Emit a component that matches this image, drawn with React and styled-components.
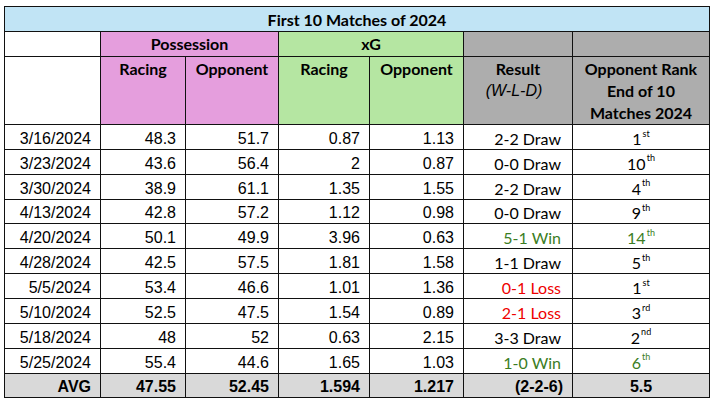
import React from "react";
import styled, { createGlobalStyle, css } from "styled-components";

const GlobalStyle = createGlobalStyle`
  html, body { margin: 0; padding: 0; background: #ffffff; }
  body { font-family: "Liberation Sans", Arial, sans-serif; }
`;

const Page = styled.div`
  padding: 6px 0 0 4px;
`;

const Sheet = styled.div`
  display: grid;
  width: max-content;
  grid-template-columns: 95px 84px 92px 90px 93px 108px 136px;
  grid-template-rows: 24px 24px 67px repeat(10, 23.87px) 23.6px;
  gap: 1px;
  padding: 1px;
  background: #111;
`;

const Cell = styled.div`
  display: flex;
  align-items: flex-end;
  background: ${(p) => p.$bg || "#ffffff"};
  color: ${(p) => p.$color || "#000000"};
  grid-column: span ${(p) => p.$span || 1};
  font-size: 16px;
  line-height: 19px;
  padding: 0 9px 1px 4px;
  box-sizing: border-box;
  overflow: hidden;
  white-space: nowrap;
`;

const TitleCell = styled(Cell)`
  align-items: center;
  justify-content: center;
  padding: 0;
  font-family: Lato, "Open Sans", sans-serif;
  font-weight: 700;
`;

const GroupCell = styled(Cell)`
  justify-content: center;
  padding: 0 0 3px 0;
  font-family: Lato, "Open Sans", sans-serif;
  font-weight: 700;
`;

const HeadCell = styled(Cell)`
  flex-direction: column;
  align-items: center;
  justify-content: flex-start;
  padding: 1px 0 0 0;
  font-family: Lato, "Open Sans", sans-serif;
  font-weight: 700;
  line-height: 22px;
`;

const SubNote = styled.span`
  font-family: "Liberation Sans", Arial, sans-serif;
  font-style: italic;
  font-weight: 400;
  margin-right: 8px;
`;

const NumCell = styled(Cell)`
  justify-content: flex-end;
  ${(p) =>
    p.$bold &&
    css`
      font-weight: 700;
    `}
`;

const ResultCell = styled(Cell)`
  justify-content: flex-end;
  font-family: Lato, "Open Sans", sans-serif;
  padding-right: 11px;
`;

const RankCell = styled(Cell)`
  justify-content: center;
  font-family: Lato, "Open Sans", sans-serif;
  padding: 0 0 1px 0;
  ${(p) =>
    p.$bold &&
    css`
      font-family: "Liberation Sans", Arial, sans-serif;
      font-weight: 700;
    `}
`;

const Sup = styled.sup`
  font-size: 9px;
  line-height: 0;
  position: relative;
  top: -2px;
  vertical-align: super;
  margin-left: 1px;
`;

const PINK = "#e59edd";
const GREEN = "#b5e6a2";
const GREY = "#adadad";
const BLUE = "#c1e4f5";
const AVG_BG = "#d9d9d9";
const WIN = "#3b7d23";
const LOSS = "#ee0000";

const rows = [
  ["3/16/2024", "48.3", "51.7", "0.87", "1.13", "2-2 Draw", "1", "st", null],
  ["3/23/2024", "43.6", "56.4", "2", "0.87", "0-0 Draw", "10", "th", null],
  ["3/30/2024", "38.9", "61.1", "1.35", "1.55", "2-2 Draw", "4", "th", null],
  ["4/13/2024", "42.8", "57.2", "1.12", "0.98", "0-0 Draw", "9", "th", null],
  ["4/20/2024", "50.1", "49.9", "3.96", "0.63", "5-1 Win", "14", "th", WIN],
  ["4/28/2024", "42.5", "57.5", "1.81", "1.58", "1-1 Draw", "5", "th", null],
  ["5/5/2024", "53.4", "46.6", "1.01", "1.36", "0-1 Loss", "1", "st", LOSS],
  ["5/10/2024", "52.5", "47.5", "1.54", "0.89", "2-1 Loss", "3", "rd", LOSS],
  ["5/18/2024", "48", "52", "0.63", "2.15", "3-3 Draw", "2", "nd", null],
  ["5/25/2024", "55.4", "44.6", "1.65", "1.03", "1-0 Win", "6", "th", WIN],
];

export default function App() {
  return (
    <Page>
      <GlobalStyle />
      <Sheet>
        <TitleCell $span={7} $bg={BLUE}>
          First 10 Matches of 2024
        </TitleCell>

        <GroupCell />
        <GroupCell $span={2} $bg={PINK}>
          Possession
        </GroupCell>
        <GroupCell $span={2} $bg={GREEN}>
          xG
        </GroupCell>
        <GroupCell $bg={GREY} />
        <GroupCell $bg={GREY} />

        <HeadCell />
        <HeadCell $bg={PINK}>Racing</HeadCell>
        <HeadCell $bg={PINK}>Opponent</HeadCell>
        <HeadCell $bg={GREEN}>Racing</HeadCell>
        <HeadCell $bg={GREEN}>Opponent</HeadCell>
        <HeadCell $bg={GREY}>
          <span>Result</span>
          <SubNote>(W-L-D)</SubNote>
        </HeadCell>
        <HeadCell $bg={GREY}>
          <span>Opponent Rank</span>
          <span>End of 10</span>
          <span>Matches 2024</span>
        </HeadCell>

        {rows.map((r) => (
          <React.Fragment key={r[0]}>
            <NumCell>{r[0]}</NumCell>
            <NumCell>{r[1]}</NumCell>
            <NumCell>{r[2]}</NumCell>
            <NumCell>{r[3]}</NumCell>
            <NumCell>{r[4]}</NumCell>
            <ResultCell $color={r[8]}>{r[5]}</ResultCell>
            <RankCell $color={r[8] === WIN ? WIN : null}>
              <span>
                {r[6]}
                <Sup>{r[7]}</Sup>
              </span>
            </RankCell>
          </React.Fragment>
        ))}

        <NumCell $bold $bg={AVG_BG}>AVG</NumCell>
        <NumCell $bold $bg={AVG_BG}>47.55</NumCell>
        <NumCell $bold $bg={AVG_BG}>52.45</NumCell>
        <NumCell $bold $bg={AVG_BG}>1.594</NumCell>
        <NumCell $bold $bg={AVG_BG}>1.217</NumCell>
        <NumCell $bold $bg={AVG_BG}>(2-2-6)</NumCell>
        <RankCell $bold $bg={AVG_BG}>5.5</RankCell>
      </Sheet>
    </Page>
  );
}
